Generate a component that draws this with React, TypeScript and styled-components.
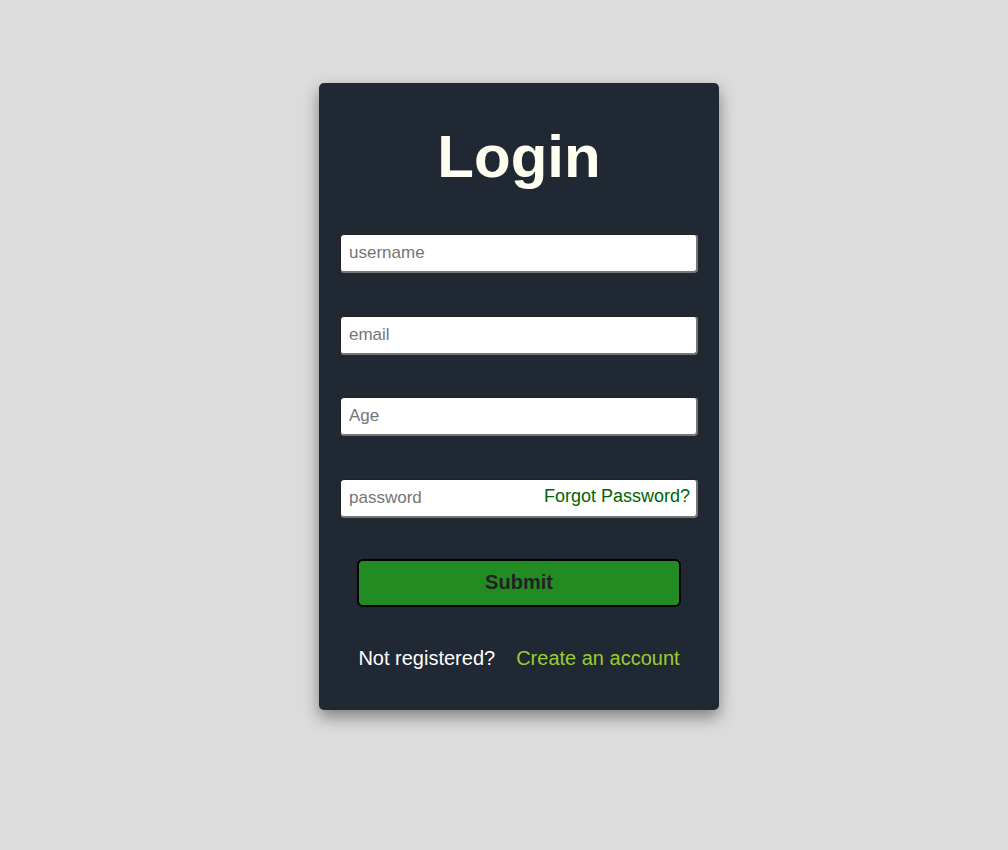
import React from 'react';
import styled, { createGlobalStyle } from 'styled-components';

const GlobalStyle = createGlobalStyle`
  html, body {
    margin: 0;
    padding: 0;
    background-color: #dcdcdc;
    font-family: "Liberation Sans", Arial, sans-serif;
  }
  body {
    min-height: 850px;
  }
`;

const Page = styled.div`
  padding-top: 83px;
`;

const Card = styled.form`
  box-sizing: border-box;
  width: 400px;
  margin-left: 319px;
  padding: 39px 21px 40px;
  background-color: #1f2833;
  border-radius: 5px;
  box-shadow: 0 7px 16px rgba(0, 0, 0, 0.42);
`;

const Title = styled.h1`
  margin: 0 0 42px;
  height: 70px;
  line-height: 70px;
  font-size: 60px;
  font-weight: 700;
  text-align: center;
  color: #fffff0;
`;

const Fields = styled.div`
  display: flex;
  flex-direction: column;
  gap: 42.6px;
`;

const Field = styled.div`
  position: relative;
`;

const Input = styled.input`
  box-sizing: border-box;
  display: block;
  width: 100%;
  height: 39px;
  padding: 0 8px;
  border: 2px inset #767676;
  border-top-width: 1px;
  border-left-width: 1px;
  border-radius: 4px;
  background: #fff;
  font-family: "Liberation Sans", Arial, sans-serif;
  font-size: 17px;
  color: #222;
  outline: none;

  &::placeholder {
    color: #757575;
  }
`;

const Forgot = styled.a`
  position: absolute;
  right: 8px;
  top: 50%;
  transform: translateY(-50%);
  margin-top: -2px;
  font-size: 18px;
  color: #006400;
  text-decoration: none;
  cursor: pointer;
`;

const Submit = styled.button`
  box-sizing: border-box;
  display: block;
  width: 324px;
  height: 48px;
  margin: 41px auto 0;
  border: 2px solid #000;
  border-radius: 6px;
  background-color: #228b22;
  font-family: "Liberation Sans", Arial, sans-serif;
  font-size: 20px;
  font-weight: 700;
  color: #222;
  cursor: pointer;
`;

const Footer = styled.p`
  margin: 40px 0 0;
  height: 23px;
  line-height: 23px;
  font-size: 20px;
  text-align: center;
  color: #fff;
`;

const CreateLink = styled.a`
  margin-left: 21px;
  color: #9acd32;
  text-decoration: none;
  cursor: pointer;
`;

export default function App() {
  return (
    <Page>
      <GlobalStyle />
      <Card onSubmit={(e) => e.preventDefault()}>
        <Title>Login</Title>
        <Fields>
          <Field>
            <Input type="text" placeholder="username" />
          </Field>
          <Field>
            <Input type="email" placeholder="email" />
          </Field>
          <Field>
            <Input type="number" placeholder="Age" />
          </Field>
          <Field>
            <Input type="password" placeholder="password" />
            <Forgot>Forgot Password?</Forgot>
          </Field>
        </Fields>
        <Submit type="submit">Submit</Submit>
        <Footer>
          Not registered?<CreateLink>Create an account</CreateLink>
        </Footer>
      </Card>
    </Page>
  );
}
